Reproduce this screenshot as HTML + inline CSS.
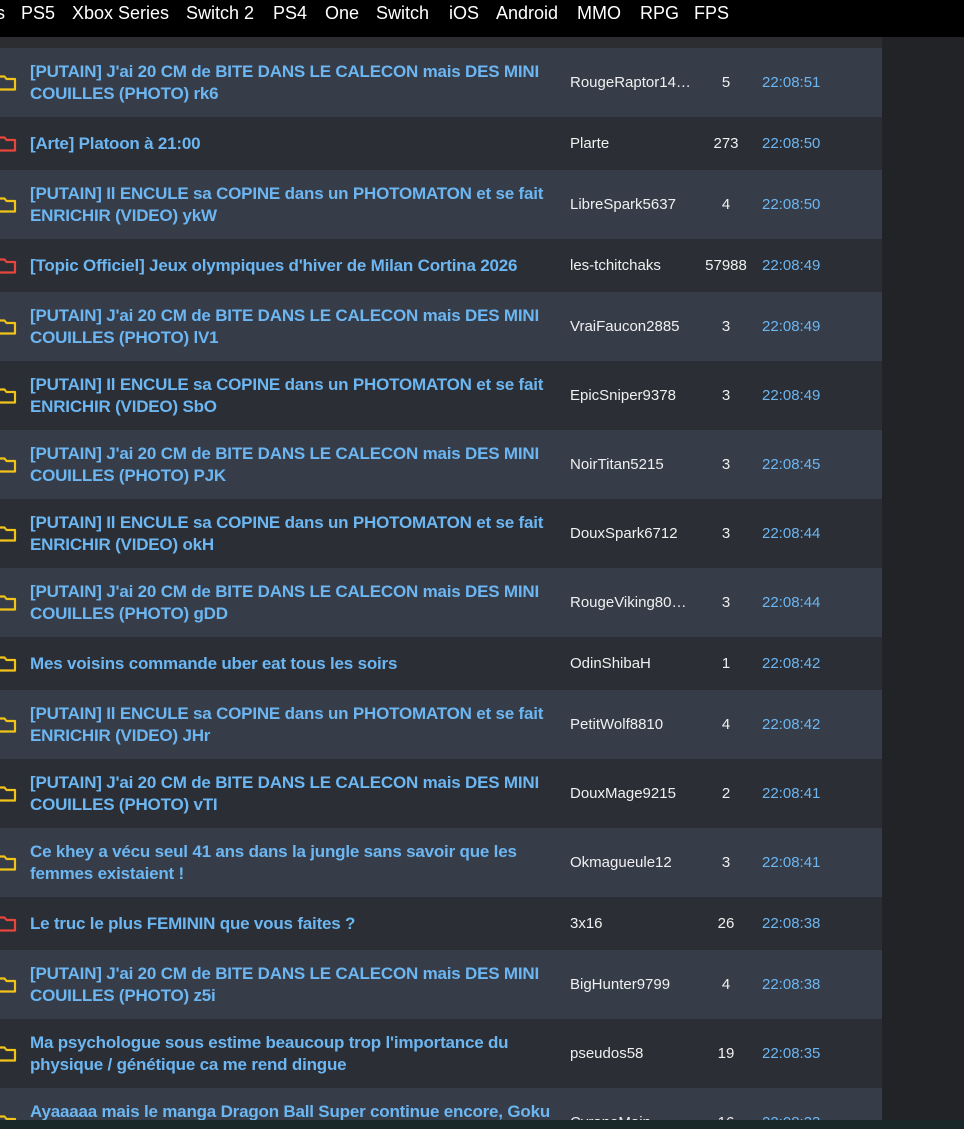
<!DOCTYPE html>
<html><head><meta charset="utf-8"><style>
*{margin:0;padding:0;box-sizing:border-box}
html{width:964px;height:1129px;overflow:hidden;background:#222326}
body{width:964px;height:1129px;overflow:hidden;background:#222326;font-family:"Liberation Sans",Arial,sans-serif;position:relative}
.nav{position:absolute;left:0;top:0;width:964px;height:37px;background:#000;color:#fff;font-size:18px;white-space:nowrap}
.nav span{position:absolute;top:3px}
.gap{position:absolute;left:0;top:37px;width:882px;height:11px;background:#2b2d31}
.list{position:absolute;left:0;top:48px;width:882px;height:1072px;overflow:hidden}
.r{position:relative;display:flex;align-items:center;background:#2b2e34}
.r.a{background:#363c48}
.r.t{height:69px}.r.s{height:53px}
.ti{position:absolute;left:30px;width:535px;color:#6cb6f2;font-weight:bold;font-size:17px;line-height:22px;letter-spacing:-0.2px}
.ps{position:absolute;left:570px;color:#f0f0f0;font-size:15px}
.n{position:absolute;left:700px;width:52px;text-align:center;color:#f0f0f0;font-size:15px}
.tm{position:absolute;left:762px;color:#6cb6f2;font-size:15px}
.f{position:absolute;left:-3px;width:20px;height:16px}
.bot{position:absolute;left:0;top:1120px;width:964px;height:9px;background:#182828;z-index:5}
</style></head><body>
<div class="nav"><span style="left:-4px">s</span><span style="left:21px">PS5</span><span style="left:72px">Xbox Series</span><span style="left:186px">Switch 2</span><span style="left:273px">PS4</span><span style="left:325px">One</span><span style="left:376px">Switch</span><span style="left:449px">iOS</span><span style="left:496px">Android</span><span style="left:577px">MMO</span><span style="left:640px">RPG</span><span style="left:694px">FPS</span></div>
<div class="gap"></div>
<div class="list" id="L"></div>
<div class="bot"></div>
<script>
var d=[
["[PUTAIN] J'ai 20 CM de BITE DANS LE CALECON mais DES MINI COUILLES (PHOTO) rk6","RougeRaptor14…","5","22:08:51",0,1],
["[Arte] Platoon à 21:00","Plarte","273","22:08:50",1,0],
["[PUTAIN] Il ENCULE sa COPINE dans un PHOTOMATON et se fait ENRICHIR (VIDEO) ykW","LibreSpark5637","4","22:08:50",0,1],
["[Topic Officiel] Jeux olympiques d'hiver de Milan Cortina 2026","les-tchitchaks","57988","22:08:49",1,0],
["[PUTAIN] J'ai 20 CM de BITE DANS LE CALECON mais DES MINI COUILLES (PHOTO) lV1","VraiFaucon2885","3","22:08:49",0,1],
["[PUTAIN] Il ENCULE sa COPINE dans un PHOTOMATON et se fait ENRICHIR (VIDEO) SbO","EpicSniper9378","3","22:08:49",0,1],
["[PUTAIN] J'ai 20 CM de BITE DANS LE CALECON mais DES MINI COUILLES (PHOTO) PJK","NoirTitan5215","3","22:08:45",0,1],
["[PUTAIN] Il ENCULE sa COPINE dans un PHOTOMATON et se fait ENRICHIR (VIDEO) okH","DouxSpark6712","3","22:08:44",0,1],
["[PUTAIN] J'ai 20 CM de BITE DANS LE CALECON mais DES MINI COUILLES (PHOTO) gDD","RougeViking80…","3","22:08:44",0,1],
["Mes voisins commande uber eat tous les soirs","OdinShibaH","1","22:08:42",0,0],
["[PUTAIN] Il ENCULE sa COPINE dans un PHOTOMATON et se fait ENRICHIR (VIDEO) JHr","PetitWolf8810","4","22:08:42",0,1],
["[PUTAIN] J'ai 20 CM de BITE DANS LE CALECON mais DES MINI COUILLES (PHOTO) vTI","DouxMage9215","2","22:08:41",0,1],
["Ce khey a vécu seul 41 ans dans la jungle sans savoir que les femmes existaient !","Okmagueule12","3","22:08:41",0,1],
["Le truc le plus FEMININ que vous faites ?","3x16","26","22:08:38",1,0],
["[PUTAIN] J'ai 20 CM de BITE DANS LE CALECON mais DES MINI COUILLES (PHOTO) z5i","BigHunter9799","4","22:08:38",0,1],
["Ma psychologue sous estime beaucoup trop l'importance du physique / génétique ca me rend dingue","pseudos58","19","22:08:35",0,1],
["Ayaaaaa mais le manga Dragon Ball Super continue encore, Goku<br>et Vegeta","CyraneMain","16","22:08:33",0,1]];
var h="";d.forEach(function(x,i){var c=x[4]?"#e8453c":"#f2c318";
h+='<div class="r '+(i%2==0?'a ':'')+(x[5]?'t':'s')+'"><svg class="f" viewBox="0 0 20 16"><path d="M1.5 1.5h6l2 2.5h8.5v10.5h-16.5z" fill="none" stroke="'+c+'" stroke-width="2.2" stroke-linejoin="round"/></svg><div class="ti"'+(i==16?' style="white-space:nowrap"':'')+'>'+x[0]+'</div><div class="ps">'+x[1]+'</div><div class="n">'+x[2]+'</div><div class="tm">'+x[3]+'</div></div>';});
document.getElementById("L").innerHTML=h;
</script>
</body></html>
